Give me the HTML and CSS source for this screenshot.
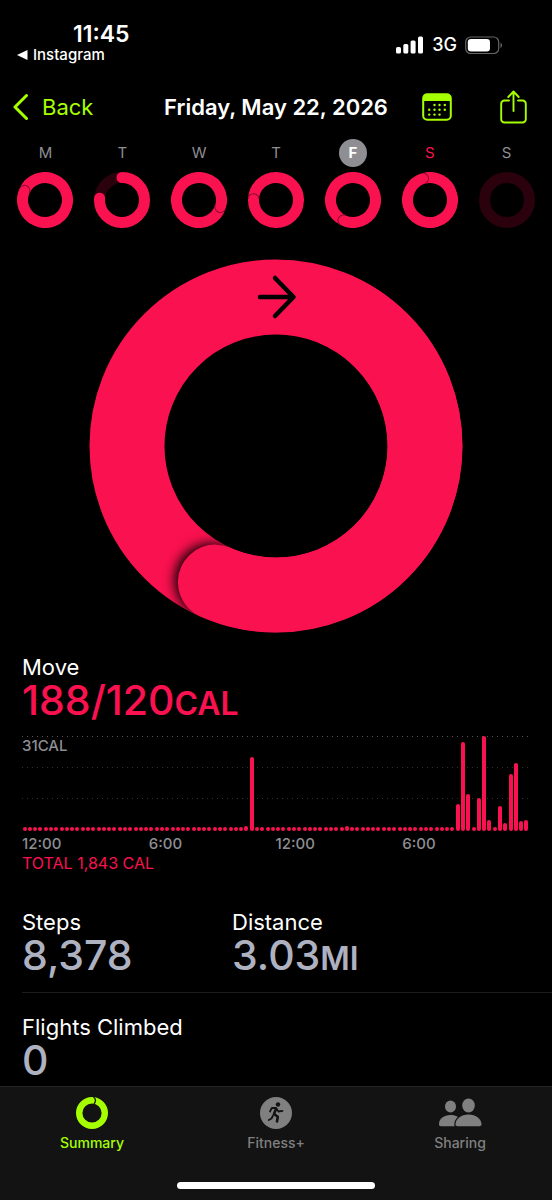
FILE: index.html
```html
<!DOCTYPE html>
<html lang="en">
<head>
<meta charset="utf-8">
<meta name="viewport" content="width=device-width, initial-scale=1">
<title>Activity</title>
<link rel="stylesheet" href="styles.css">
</head>
<body>
<svg class="defs" aria-hidden="true">
  <symbol id="lap" viewBox="0 0 56 56">
    <circle cx="28" cy="28" r="22.5" fill="none" stroke="#fa114f" stroke-width="11"/>
    <path d="M28 0A5.5 5.5 0 0 1 28 11" fill="none" stroke="#8c0a30" stroke-width="1"/>
  </symbol>
</svg>
<header>
  <div class="status">
    <div class="status-left">
      <div class="clock">11:45</div>
      <a class="return" href="#"><svg width="11" height="10" viewBox="0 0 11 10"><path d="M0 5L10.500 0V10Z" fill="#fff"/></svg>Instagram</a>
    </div>
    <div class="status-right">
      <svg width="28" height="18" viewBox="0 0 28 18" fill="#fff"><rect x="0" y="11" width="5" height="6.500" rx="1.500"/><rect x="7.300" y="8" width="5" height="9.500" rx="1.500"/><rect x="14.600" y="4.500" width="5" height="13" rx="1.500"/><rect x="22" y="0.500" width="5" height="17" rx="1.500"/></svg>
      <span>3G</span>
      <svg width="38" height="19" viewBox="0 0 38 19"><rect x="0.700" y="1" width="33" height="16.500" rx="5" fill="none" stroke="#666" stroke-width="1.200"/><rect x="2.800" y="3" width="22.200" height="12.500" rx="3.300" fill="#fff"/><path d="M35.500 6.800C37.500 7.500 37.500 11.200 35.500 11.900Z" fill="#666"/></svg>
    </div>
  </div>
  <nav class="bar">
    <button class="back" type="button"><svg width="16" height="28" viewBox="0 0 16 28"><path d="M13.500 2.500L2 14L13.500 25.500" fill="none" stroke="#a6ff00" stroke-width="3" stroke-linecap="round" stroke-linejoin="round"/></svg>Back</button>
    <h1>Friday, May 22, 2026</h1>
    <div class="actions">
      <button type="button" aria-label="Calendar"><svg width="30" height="28" viewBox="0 0 30 28"><rect x="1.200" y="1.200" width="27.600" height="25.600" rx="4" fill="none" stroke="#a6ff00" stroke-width="2"/><path d="M1 8V5a4 4 0 0 1 4-4H25a4 4 0 0 1 4 4V8Z" fill="#a6ff00"/><g fill="#a6ff00"><circle cx="12.500" cy="12" r="1.200"/><circle cx="17.500" cy="12" r="1.200"/><circle cx="22.800" cy="12" r="1.200"/><circle cx="7.200" cy="16.800" r="1.200"/><circle cx="12.500" cy="16.800" r="1.200"/><circle cx="17.500" cy="16.800" r="1.200"/><circle cx="22.800" cy="16.800" r="1.200"/><circle cx="7.200" cy="21.600" r="1.200"/><circle cx="12.500" cy="21.600" r="1.200"/><circle cx="17.500" cy="21.600" r="1.200"/></g></svg></button>
      <button type="button" aria-label="Share"><svg width="27" height="34" viewBox="0 0 27 34" fill="none" stroke="#a6ff00" stroke-width="1.900" stroke-linecap="round" stroke-linejoin="round"><path d="M9 10.500H4.500a3.300 3.300 0 0 0-3.300 3.300V29.200a3.300 3.300 0 0 0 3.300 3.300H22.500a3.300 3.300 0 0 0 3.300-3.300V13.800a3.300 3.300 0 0 0-3.300-3.300H18"/><path d="M13.500 21V2M8.300 7L13.500 1.500L18.700 7"/></svg></button>
    </div>
  </nav>
  <div class="week">
    <a href="#" class="day"><span>M</span><svg viewBox="0 0 56 56"><use href="#lap" width="56" height="56" transform="rotate(294 28 28)"/></svg></a>
    <a href="#" class="day"><span>T</span><svg viewBox="0 0 56 56" fill="none" stroke-width="11"><circle cx="28" cy="28" r="22.500" stroke="#2b010d"/><circle cx="28" cy="28" r="22.500" stroke="#fa114f" stroke-linecap="round" pathLength="360" stroke-dasharray="275 85" transform="rotate(-90 28 28)"/></svg></a>
    <a href="#" class="day"><span>W</span><svg viewBox="0 0 56 56"><use href="#lap" width="56" height="56" transform="rotate(108 28 28)"/></svg></a>
    <a href="#" class="day"><span>T</span><svg viewBox="0 0 56 56"><use href="#lap" width="56" height="56" transform="rotate(272 28 28)"/></svg></a>
    <a href="#" class="day selected"><span>F</span><svg viewBox="0 0 56 56"><use href="#lap" width="56" height="56" transform="rotate(205 28 28)"/></svg></a>
    <a href="#" class="day today"><span>S</span><svg viewBox="0 0 56 56"><use href="#lap" width="56" height="56" transform="rotate(342 28 28)"/></svg></a>
    <a href="#" class="day"><span>S</span><svg viewBox="0 0 56 56"><circle cx="28" cy="28" r="22.500" fill="none" stroke="#2b010d" stroke-width="11"/></svg></a>
  </div>
</header>
<main>
  <svg class="ring" viewBox="0 0 374 374" role="img" aria-label="Move ring, 157 percent">
    <defs>
      <mask id="band"><circle cx="187" cy="187" r="149" fill="none" stroke="#fff" stroke-width="75"/></mask>
      <filter id="soft" x="-50%" y="-50%" width="200%" height="200%"><feGaussianBlur stdDeviation="6"/></filter>
    </defs>
    <circle cx="187" cy="187" r="149" fill="none" stroke="#fa114f" stroke-width="75"/>
    <g mask="url(#band)"><g transform="rotate(204 187 187)">
      <circle cx="191" cy="38" r="37" fill="#000" filter="url(#soft)"/>
      <path d="M187 336A149 149 0 0 1 187 38" fill="none" stroke="#fa114f" stroke-width="75" stroke-linecap="round"/>
    </g></g>
    <path d="M171 38H204M186 19L204.500 38L186 57" fill="none" stroke="#000" stroke-width="4.500" stroke-linecap="round" stroke-linejoin="round"/>
  </svg>
  <section class="move">
    <h2>Move</h2>
    <p class="value">188/120<small>CAL</small></p>
    <div class="chart">
      <div class="gridline"><span>31CAL</span></div>
      <div class="gridline dim"></div>
      <div class="gridline dim"></div>
      <div class="bars" id="bars"></div>
    </div>
    <div class="hours"><span>12:00</span><span>6:00</span><span>12:00</span><span>6:00</span></div>
    <p class="total">TOTAL 1,843 CAL</p>
  </section>
  <section class="stats">
    <div><h2>Steps</h2><p class="value">8,378</p></div>
    <div><h2>Distance</h2><p class="value">3.03<small>MI</small></p></div>
  </section>
  <section class="stats">
    <div><h2>Flights Climbed</h2><p class="value">0</p></div>
  </section>
</main>
<footer>
  <nav class="tabs">
    <a href="#" class="active"><svg width="32" height="32" viewBox="0 0 32 32"><circle cx="16" cy="16" r="12.800" fill="none" stroke="#a6ff00" stroke-width="6.400"/><path d="M17.500 0C20 2 20 4.500 18 7" fill="none" stroke="#131313" stroke-width="1.300"/></svg>Summary</a>
    <a href="#"><svg width="32" height="32" viewBox="0 0 32 32"><circle cx="16" cy="16" r="16" fill="#808080"/><g fill="none" stroke="#131313" stroke-width="1.800" stroke-linecap="round" stroke-linejoin="round"><path d="M10 14.500L11.800 11L16 11L18.500 14.500L22.500 13.800"/><path d="M16 12L14 17L17.800 19.800L17 24.500" stroke-width="2.600"/><path d="M13 18.500L11.500 21.500L8.800 23"/></g><circle cx="18" cy="7.500" r="2.200" fill="#131313"/></svg>Fitness+</a>
    <a href="#"><svg width="44" height="32" viewBox="0 0 44 32" fill="#808080"><ellipse cx="12.500" cy="9.500" rx="5.500" ry="6"/><path d="M1 27C1 21.500 6 18 12.500 18C17 18 21 19.500 23 23V29.200H3C1.500 29.200 1 28.500 1 27Z"/><path d="M17.500 27.500C17.500 22 23 17.500 30.500 17.500S43.500 22 43.500 27.500Q43.500 29.200 41.500 29.200H19.500Q17.500 29.200 17.500 27.500Z" stroke="#131313" stroke-width="2.500" paint-order="stroke"/><ellipse cx="30.500" cy="8.500" rx="6.300" ry="7"/></svg>Sharing</a>
  </nav>
  <div class="home"></div>
</footer>
<script src="chart.js"></script>
</body>
</html>
```
FILE: styles.css
```css
* { box-sizing: border-box; margin: 0; padding: 0; }
body { min-height: 100vh; display: flex; flex-direction: column; background: #000; color: #fff; font-family: Inter, "Liberation Sans", sans-serif; }
a { color: inherit; text-decoration: none; }
button { background: none; border: 0; color: #a6ff00; font: inherit; display: flex; align-items: center; }
svg { display: block; flex: none; }
.defs { position: absolute; width: 0; height: 0; }

.status { display: flex; justify-content: space-between; align-items: center; padding: 22px 49px 0 17px; }
.clock { padding-left: 56px; font-size: 23px; line-height: 24px; font-weight: 600; }
.return { display: flex; align-items: center; gap: 5px; font-size: 15px; line-height: 18px; font-weight: 500; }
.status-right { display: flex; align-items: center; gap: 8px; padding-top: 4px; font-size: 18px; line-height: 20px; font-weight: 500; }

.bar { display: grid; grid-template-columns: 1fr auto 1fr; align-items: center; padding: 0 13px; height: 42px; margin-top: 22px; }
.back { gap: 13px; font-size: 22px; }
h1 { font-size: 22px; line-height: 28px; font-weight: 600; white-space: nowrap; }
.actions { display: flex; justify-content: flex-end; align-items: center; gap: 48px; padding-right: 12px; }

.week { display: grid; grid-template-columns: repeat(7, 1fr); padding: 0 7px; margin-top: 11px; }
.day { display: flex; flex-direction: column; align-items: center; gap: 5px; font-size: 15px; color: #8e8e93; }
.day span { width: 28px; line-height: 28px; border-radius: 50%; text-align: center; }
.day svg { width: 56px; height: 56px; }
.selected span { background: #8e8e93; color: #fff; font-weight: 700; }
.today span { color: #fa114f; }

main { flex: 1; }
.ring { width: 68%; max-width: 374px; margin: 31px auto 21px; }
h2 { font-size: 22px; line-height: 26px; font-weight: 400; }
.value { font-size: 41px; line-height: 40px; font-weight: 500; color: #aeb2c0; }
.value small { font-size: 32px; font-weight: 600; }
.move .value { color: #fa114f; }
.move { padding: 0 23px 0 22px; }
.chart { position: relative; margin-top: 12px; height: 95px; display: grid; grid-template-rows: repeat(3, 31px); }
.gridline { background: repeating-linear-gradient(90deg, #555 0 1px, transparent 1px 5px) top / 100% 1px no-repeat; font-size: 15px; line-height: 20px; font-weight: 500; color: #8e8e93; }
.dim { background-image: repeating-linear-gradient(90deg, #333 0 1px, transparent 1px 5px); }
.bars { position: absolute; inset: 0; display: grid; grid-template-columns: repeat(96, 1fr); align-items: end; justify-items: center; }
.bars i { width: 4px; border-radius: 2px; background: #fa114f; }
.hours { display: grid; grid-template-columns: repeat(4, 1fr); margin-top: 4px; font-size: 15px; line-height: 18px; font-weight: 500; color: #8e8e93; }
.total { font-size: 16px; line-height: 20px; color: #fa114f; }

.stats { display: grid; grid-template-columns: 210px 1fr; margin-left: 22px; padding: 21px 0 13px; }
.move + .stats { margin-top: 15px; border-bottom: 1px solid #1c1c1e; }
.stats + .stats { padding-bottom: 6px; }

footer { background: #131313; border-top: 1px solid #222; padding-bottom: 11px; }
.tabs { display: grid; grid-template-columns: repeat(3, 1fr); padding-top: 10px; }
.tabs a { display: flex; flex-direction: column; align-items: center; gap: 5px; font-size: 14px; line-height: 18px; font-weight: 500; color: #808080; }
.tabs .active { color: #a6ff00; }
.home { width: 36%; height: 7px; border-radius: 4px; background: #fff; margin: 30px auto 0; }
```
FILE: chart.js
```js
// Bar heights in pixels, one per quarter hour; quiet quarters show a dot.
const active = { 42: 5, 43: 74, 61: 5, 82: 27, 83: 89, 84: 37, 86: 33, 87: 95, 88: 11, 90: 25, 91: 8, 92: 57, 93: 68, 94: 10, 95: 11 };
const bars = document.getElementById("bars");
for (let quarter = 0; quarter < 96; quarter++) {
  const bar = document.createElement("i");
  bar.style.height = (active[quarter] || 4) + "px";
  bars.append(bar);
}
```
